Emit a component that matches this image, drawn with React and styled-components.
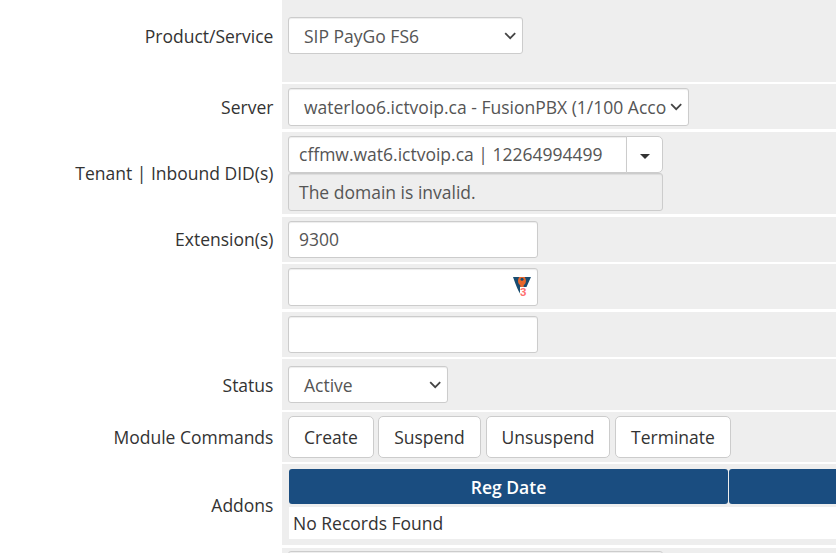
import React from "react";
import styled, { createGlobalStyle } from "styled-components";

const GlobalStyle = createGlobalStyle`
  * { box-sizing: border-box; }
  html, body { margin: 0; background: #fff; overflow: hidden; }
  body { font-family: "Open Sans", sans-serif; font-size: 17.5px; line-height: 25px; color: #333; }
`;

const Form = styled.div`
  width: 836px;
  height: 553px;
  overflow: hidden;
`;

const Row = styled.div`
  display: grid;
  grid-template-columns: 282px 1fr;
  height: ${(p) => p.$height}px;
  margin-bottom: ${(p) => p.$gap}px;
`;

const Label = styled.div`
  padding: ${(p) => p.$top}px 8.6px 0 0;
  text-align: right;
  white-space: nowrap;
`;

const Field = styled.div`
  padding: ${(p) => p.$top}px 0 0 6px;
  background: #eee;
  min-width: 0;
`;

const Control = styled.div`
  display: flex;
  align-items: center;
  width: ${(p) => p.$width}px;
  height: ${(p) => p.$height || 37}px;
  padding: 0 10px;
  border: 1px solid #ccc;
  border-radius: 3px;
  background: ${(p) => (p.$muted ? "#eee" : "#fff")};
  box-shadow: inset 0 1px 1px rgba(0, 0, 0, 0.075);
  color: #555;
  white-space: nowrap;
`;

const SelectBox = styled(Control)`
  padding: ${(p) => (p.$height ? 0 : 1)}px 6px 0 15px;
  justify-content: space-between;
`;

const SelectText = styled.span`
  flex: 1;
  min-width: 0;
`;

const ChevronIcon = styled.svg`
  flex: none;
`;

const IconInput = styled(Control)`
  justify-content: flex-end;
  padding: 0 5px 0 0;
`;

const Combo = styled.div`
  display: flex;
  width: 375px;
`;

const ComboInput = styled(Control)`
  border-radius: 3px 0 0 3px;
`;

const ComboToggle = styled.div`
  display: flex;
  align-items: center;
  justify-content: center;
  width: 37px;
  height: 37px;
  margin-left: -1px;
  border: 1px solid #ccc;
  border-radius: 0 5px 5px 0;
  background: #fff;
`;

const Caret = styled.span`
  margin-top: 3px;
  border-top: 5px solid #333;
  border-left: 5px solid transparent;
  border-right: 5px solid transparent;
`;

const Commands = styled.div`
  display: flex;
`;

const Command = styled.button`
  width: ${(p) => p.$width}px;
  height: 42px;
  margin: 0 ${(p) => p.$gap}px 0 0;
  padding: 0;
  border: 1px solid #ccc;
  border-radius: 5px;
  background: #fff;
  color: #333;
  font: inherit;
`;

const Table = styled.div`
  display: grid;
  grid-template-columns: 439px 439px;
  column-gap: 1px;
  row-gap: 3px;
  margin-left: 1px;
  width: 547px;
  overflow: hidden;
`;

const HeadCell = styled.div`
  height: 35px;
  padding-top: 6px;
  border-radius: 3px;
  background: #1a4d80;
  color: #fff;
  font-weight: 600;
  line-height: 25px;
  text-align: center;
`;

const EmptyCell = styled.div`
  grid-column: 1 / -1;
  height: 32px;
  padding: 4px 4px 3px;
  background: #fff;
`;

function Chevron() {
  return (
    <ChevronIcon width="12" height="8" viewBox="0 0 12 8" fill="none" stroke="#444" strokeWidth="1.8">
      <path d="M1.2 1.2 6.2 6.2 11.2 1.2" />
    </ChevronIcon>
  );
}

function KeyIcon() {
  return (
    <svg width="20" height="22" viewBox="0 0 20 22">
      <path d="M1 1H19L14.5 11H8V17.5Q5.5 14 1 1Z" fill="#194c70" />
      <path d="M7.4 1C5.2 3.6 5.8 7.8 8.3 9.2V12h3.4V9.2C14.2 7.8 14.8 3.6 12.6 1Z" fill="#e8672c" />
      <circle cx="10" cy="3.2" r="1.5" fill="#194c70" />
      <rect x="8" y="11" width="7" height="10" fill="#fff" />
      <text x="8.1" y="19.9" fontFamily="Liberation Sans, sans-serif" fontSize="11.5" fontWeight="700" fill="#ff7070">3</text>
    </svg>
  );
}

function Select({ width, height, children }) {
  return (
    <SelectBox $width={width} $height={height}>
      <SelectText>{children}</SelectText>
      <Chevron />
    </SelectBox>
  );
}

function FormRow({ height, gap, label, labelTop, top, children }) {
  return (
    <Row $height={height} $gap={gap}>
      <Label $top={labelTop}>{label}</Label>
      <Field $top={top}>{children}</Field>
    </Row>
  );
}

export default function App() {
  return (
    <>
      <GlobalStyle />
      <Form>
        <FormRow height={82} gap={2} label="Product/Service" labelTop={24} top={17}>
          <Select width={235}>SIP PayGo FS6</Select>
        </FormRow>
        <FormRow height={45} gap={3} label="Server" labelTop={11} top={4}>
          <Select width={401} height={38}>waterloo6.ictvoip.ca - FusionPBX (1/100 Acco</Select>
        </FormRow>
        <FormRow height={82} gap={3} label="Tenant | Inbound DID(s)" labelTop={29} top={4}>
          <Combo>
            <ComboInput $width={339}>cffmw.wat6.ictvoip.ca | 12264994499</ComboInput>
            <ComboToggle><Caret /></ComboToggle>
          </Combo>
          <Control $width={375} $height={38} $muted>The domain is invalid.</Control>
        </FormRow>
        <FormRow height={45} gap={2} label="Extension(s)" labelTop={10} top={4}>
          <Control $width={250}>9300</Control>
        </FormRow>
        <FormRow height={45} gap={3} top={4}>
          <IconInput $width={250} $height={38}><KeyIcon /></IconInput>
        </FormRow>
        <FormRow height={45} gap={2} top={4}>
          <Control $width={250} />
        </FormRow>
        <FormRow height={51} gap={2} label="Status" labelTop={14} top={7}>
          <Select width={160}>Active</Select>
        </FormRow>
        <FormRow height={50} gap={2} label="Module Commands" labelTop={13} top={4}>
          <Commands>
            <Command $width={86} $gap={4}>Create</Command>
            <Command $width={103} $gap={5}>Suspend</Command>
            <Command $width={124} $gap={5}>Unsuspend</Command>
            <Command $width={116} $gap={0}>Terminate</Command>
          </Commands>
        </FormRow>
        <FormRow height={81} gap={3} label="Addons" labelTop={29} top={5}>
          <Table>
            <HeadCell>Reg Date</HeadCell>
            <HeadCell />
            <EmptyCell>No Records Found</EmptyCell>
          </Table>
        </FormRow>
        <FormRow height={45} gap={0} top={3}>
          <Control $width={375} />
        </FormRow>
      </Form>
    </>
  );
}
